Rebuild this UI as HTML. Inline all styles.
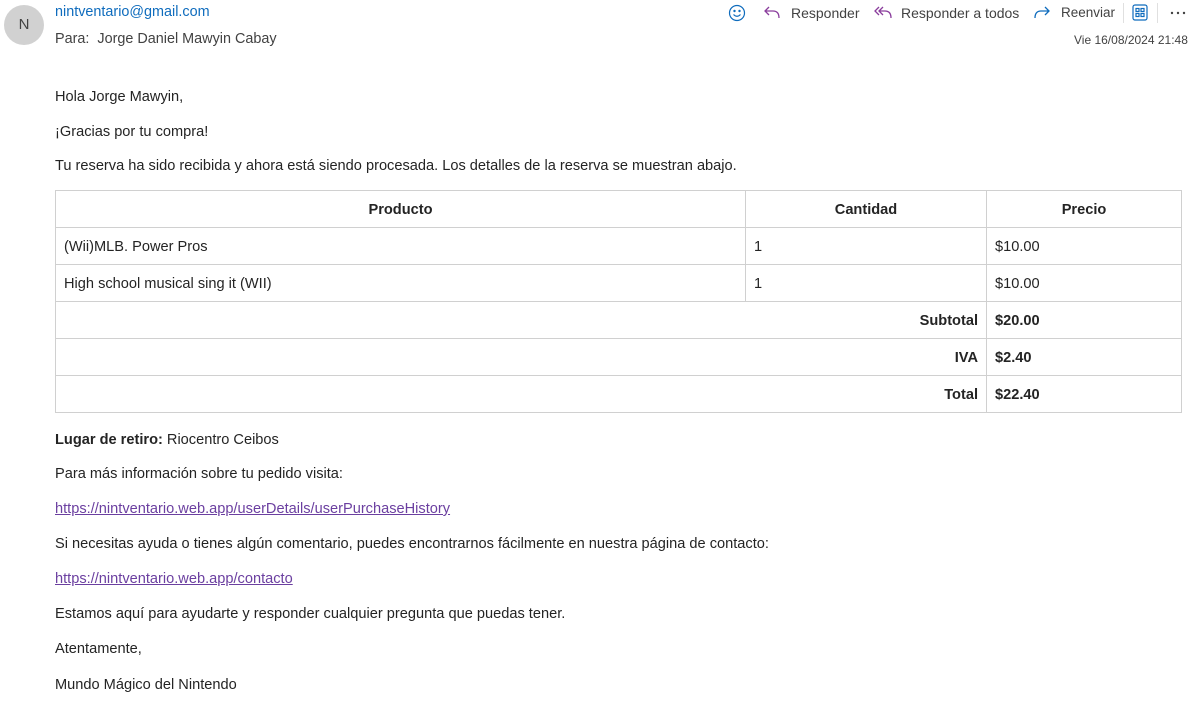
<!DOCTYPE html>
<html><head><meta charset="utf-8"><style>
body{margin:0;width:1199px;height:701px;background:#fff;font-family:"Liberation Sans",sans-serif;color:#242424;font-size:14.6px;position:relative;overflow:hidden}
.a{position:absolute;white-space:nowrap}
.av{position:absolute;left:4px;top:5px;width:40px;height:40px;border-radius:50%;background:#d1d1d1;color:#424242;font-size:15px;text-align:center;line-height:40px}
table{position:absolute;left:55px;top:190px;width:1127px;border-collapse:collapse}
td,th{border:1px solid #d0d0d0;height:35px;padding:1px 8px 0;font-size:14.6px;box-sizing:content-box}
th{font-weight:bold}
.r{text-align:right;font-weight:bold}
a{color:#6b3fa0;text-decoration:underline}
.tb{color:#424242;font-size:14px}
</style></head><body>
<div class="av">N</div>
<div class="a" style="left:55px;top:4px;color:#0f6cbd;font-size:14.4px">nintventario@gmail.com</div>
<div class="a" style="left:55px;top:31px;color:#424242;font-size:14.4px">Para:&nbsp; Jorge Daniel Mawyin Cabay</div>
<svg class="a" style="left:728px;top:4px" width="18" height="18" viewBox="0 0 18 18" fill="none" stroke="#0f6cbd" stroke-width="1.2"><circle cx="9" cy="9" r="7.5"/><circle cx="6.5" cy="7" r=".6" fill="#0f6cbd"/><circle cx="11.5" cy="7" r=".6" fill="#0f6cbd"/><path d="M5.5 10.5q3.5 3.5 7 0"/></svg>
<svg class="a" style="left:763px;top:5px" width="18" height="16" viewBox="0 0 18 16" fill="none" stroke="#8a3d9c" stroke-width="1.3"><path d="M6 2L2 6l4 4M2 6h8q6 0 6 7"/></svg>
<div class="a tb" style="left:791px;top:5px">Responder</div>
<svg class="a" style="left:873px;top:5px" width="20" height="16" viewBox="0 0 20 16" fill="none" stroke="#8a3d9c" stroke-width="1.3"><path d="M6 2L2 6l4 4M10 2L6 6l4 4M6 6h6q6 0 6 7"/></svg>
<div class="a tb" style="left:901px;top:5px">Responder a todos</div>
<svg class="a" style="left:1033px;top:5px" width="18" height="16" viewBox="0 0 18 16" fill="none" stroke="#0f6cbd" stroke-width="1.3"><path d="M12 2l4 4-4 4M16 6H8q-6 0-6 7"/></svg>
<div class="a tb" style="left:1061px;top:5px;font-size:13.5px">Reenviar</div>
<div class="a" style="left:1123px;top:3px;width:1px;height:20px;background:#e0e0e0"></div>
<svg class="a" style="left:1132px;top:4px" width="16" height="17" viewBox="0 0 16 17" fill="none" stroke="#0f6cbd" stroke-width="1.2"><rect x="1" y="1" width="14" height="15" rx="2"/><rect x="4" y="4.5" width="3" height="3"/><rect x="9" y="4.5" width="3" height="3"/><rect x="4" y="9.5" width="3" height="3"/><rect x="9" y="9.5" width="3" height="3"/></svg>
<div class="a" style="left:1157px;top:3px;width:1px;height:20px;background:#e0e0e0"></div>
<svg class="a" style="left:1170px;top:11px" width="16" height="4" viewBox="0 0 16 4" fill="#424242"><circle cx="2" cy="2" r="1.2"/><circle cx="8" cy="2" r="1.2"/><circle cx="14" cy="2" r="1.2"/></svg>
<div class="a" style="left:1074px;top:33px;font-size:12px;color:#424242">Vie 16/08/2024 21:48</div>
<div class="a" style="left:55px;top:89px">Hola Jorge Mawyin,</div>
<div class="a" style="left:55px;top:124px">¡Gracias por tu compra!</div>
<div class="a" style="left:55px;top:158px">Tu reserva ha sido recibida y ahora está siendo procesada. Los detalles de la reserva se muestran abajo.</div>
<table>
<tr><th style="width:673px">Producto</th><th style="width:224px">Cantidad</th><th>Precio</th></tr>
<tr><td>(Wii)MLB. Power Pros</td><td>1</td><td>$10.00</td></tr>
<tr><td>High school musical sing it (WII)</td><td>1</td><td>$10.00</td></tr>
<tr><td colspan="2" class="r">Subtotal</td><td style="font-weight:bold">$20.00</td></tr>
<tr><td colspan="2" class="r">IVA</td><td style="font-weight:bold">$2.40</td></tr>
<tr><td colspan="2" class="r">Total</td><td style="font-weight:bold">$22.40</td></tr>
</table>
<div class="a" style="left:55px;top:432px"><b>Lugar de retiro:</b> Riocentro Ceibos</div>
<div class="a" style="left:55px;top:466px">Para más información sobre tu pedido visita:</div>
<div class="a" style="left:55px;top:501px"><a>https://nintventario.web.app/userDetails/userPurchaseHistory</a></div>
<div class="a" style="left:55px;top:536px">Si necesitas ayuda o tienes algún comentario, puedes encontrarnos fácilmente en nuestra página de contacto:</div>
<div class="a" style="left:55px;top:571px"><a>https://nintventario.web.app/contacto</a></div>
<div class="a" style="left:55px;top:606px">Estamos aquí para ayudarte y responder cualquier pregunta que puedas tener.</div>
<div class="a" style="left:55px;top:641px">Atentamente,</div>
<div class="a" style="left:55px;top:677px">Mundo Mágico del Nintendo</div>
</body></html>
